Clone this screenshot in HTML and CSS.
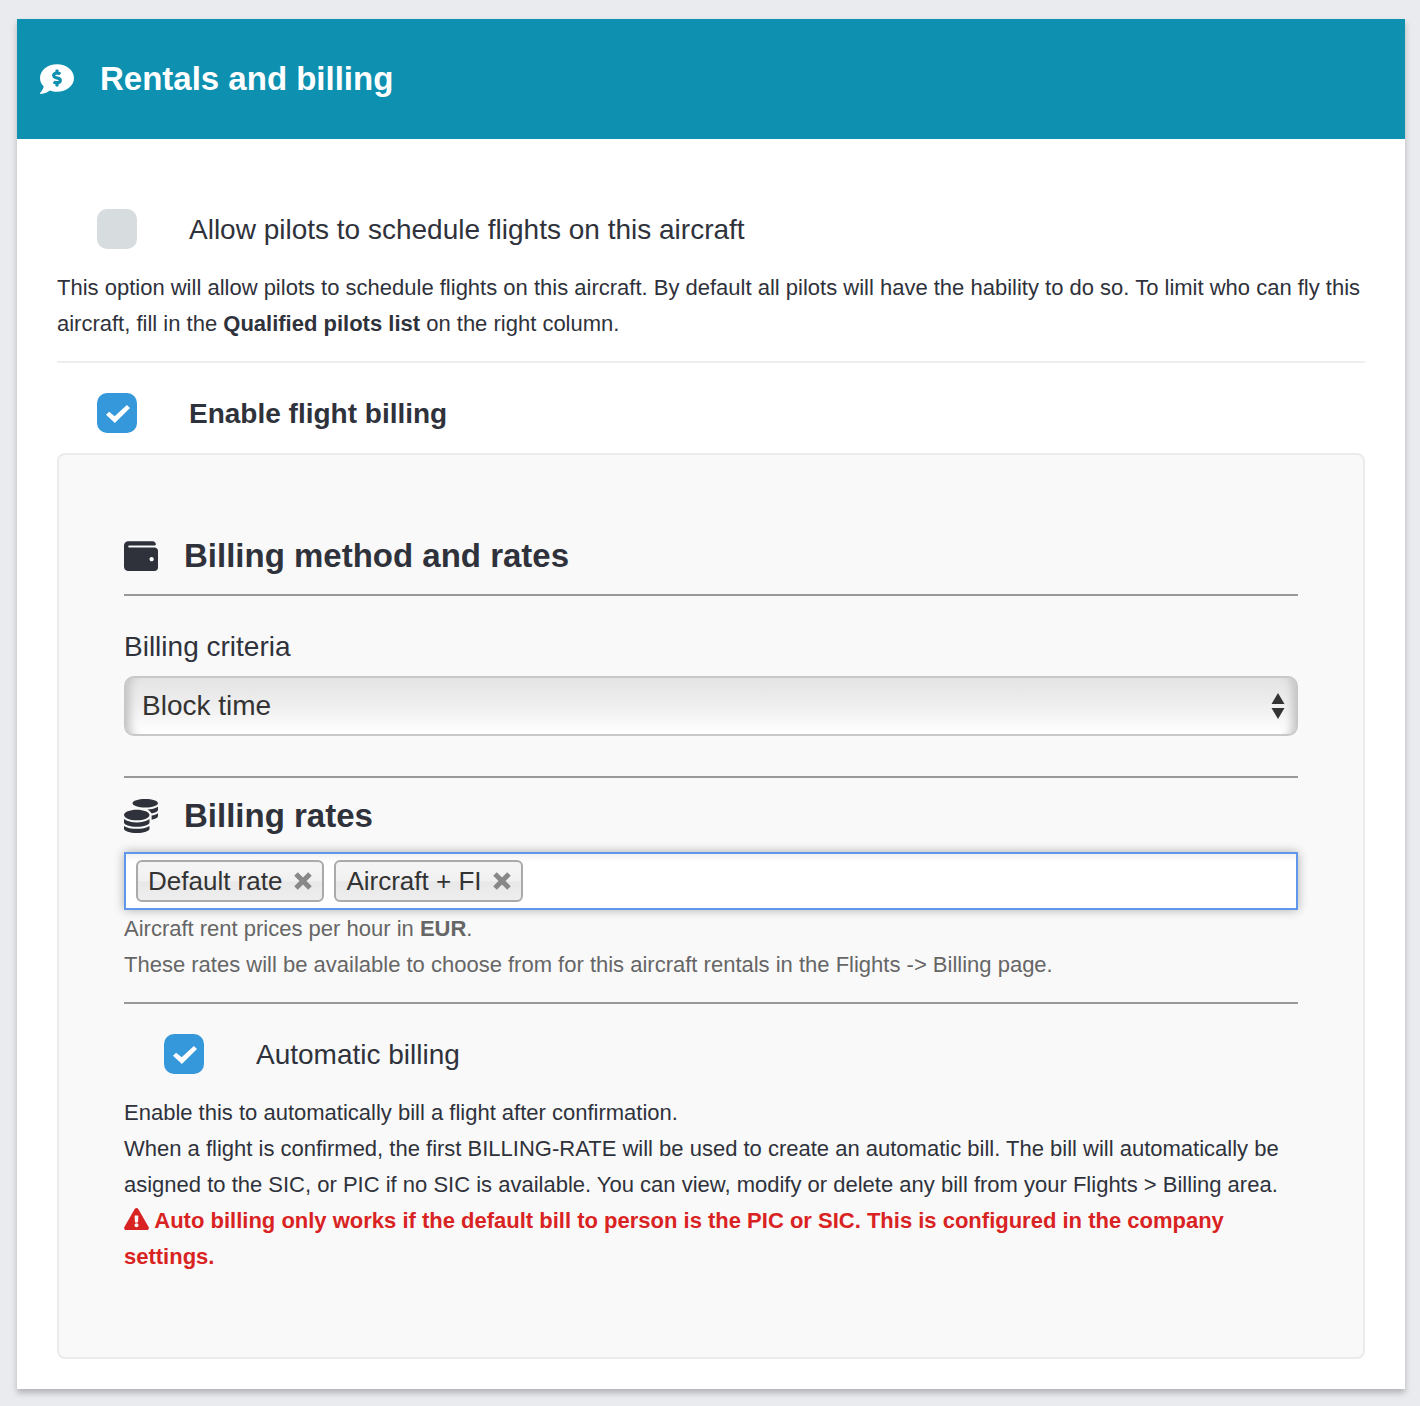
FILE: index.html
```html
<!DOCTYPE html>
<html lang="en">
  <head>
    <meta charset="UTF-8" />
    <meta name="viewport" content="width=device-width, initial-scale=1.0" />
    <title>Rentals and billing</title>
    <link rel="stylesheet" href="styles.css">
  </head>
  <body>
    <form class="card">
      <header class="card-header">
        <svg class="icon" viewBox="0 0 512 512" aria-hidden="true"><path d="M256 32C114.62 32 0 125.12 0 240c0 49.56 21.41 95.01 57.02 130.74C44.46 421.05 2.7 465.97 2.2 466.5A7.995 7.995 0 0 0 8 480c66.26 0 115.99-31.75 140.6-51.38C181.29 440.93 217.59 448 256 448c141.38 0 256-93.12 256-208S397.38 32 256 32zm24 302.44V352c0 8.84-7.16 16-16 16h-16c-8.84 0-16-7.16-16-16v-17.73c-11.42-1.35-22.28-5.19-31.78-11.46-6.22-4.11-6.82-13.11-1.55-18.38l17.52-17.52c3.74-3.74 9.31-4.24 14.11-2.03 3.18 1.46 6.66 2.22 10.26 2.22h32.78c4.66 0 8.44-3.78 8.44-8.42 0-3.75-2.52-7.08-6.12-8.11l-50.07-14.3c-22.25-6.35-40.01-24.71-42.91-47.67-4.05-32.07 19.03-59.43 49.32-63.05V128c0-8.84 7.16-16 16-16h16c8.84 0 16 7.16 16 16v17.73c11.42 1.35 22.28 5.19 31.78 11.46 6.22 4.11 6.82 13.11 1.55 18.38l-17.52 17.52c-3.74 3.74-9.31 4.24-14.11 2.03a24.516 24.516 0 0 0-10.26-2.22h-32.78c-4.66 0-8.44 3.78-8.44 8.42 0 3.75 2.52 7.08 6.12 8.11l50.07 14.3c22.25 6.36 40.01 24.71 42.91 47.67 4.05 32.06-19.03 59.42-49.32 63.04z"/></svg>
        <h2>Rentals and billing</h2>
      </header>

      <div class="card-body">
        <div class="check-row">
          <input type="checkbox" id="allowPilots" />
          <label for="allowPilots">Allow pilots to schedule flights on this aircraft</label>
        </div>
        <p class="text">This option will allow pilots to schedule flights on this aircraft. By default all pilots will have the hability to do so. To limit who can fly this aircraft, fill in the <strong>Qualified pilots list</strong> on the right column.</p>
        <hr class="light" />

        <div class="check-row">
          <input type="checkbox" id="enableBilling" checked />
          <label for="enableBilling"><strong>Enable flight billing</strong></label>
        </div>

        <section class="panel">
          <div class="section-title">
            <svg class="icon" viewBox="0 0 512 512" aria-hidden="true"><path d="M461.2 128H80c-8.84 0-16-7.16-16-16s7.16-16 16-16h384c8.84 0 16-7.16 16-16 0-26.51-21.49-48-48-48H64C28.65 32 0 60.65 0 96v320c0 35.35 28.65 64 64 64h397.2c28.02 0 50.8-21.53 50.8-48V176c0-26.47-22.78-48-50.8-48zM416 336c-17.67 0-32-14.33-32-32s14.33-32 32-32 32 14.33 32 32-14.33 32-32 32z"/></svg>
            <h3>Billing method and rates</h3>
          </div>
          <hr />

          <label class="field-label" for="criteria">Billing criteria</label>
          <div class="select-wrap">
            <select id="criteria">
              <option>Block time</option>
            </select>
            <svg class="arrows" viewBox="0 0 14 26" aria-hidden="true"><path d="M7 0l6.5 11H.5zM7 26l6.5-11H.5z"/></svg>
          </div>
          <hr />

          <div class="section-title">
            <svg class="icon" viewBox="0 0 512 512" aria-hidden="true"><path d="M0 405.3V448c0 35.3 86 64 192 64s192-28.7 192-64v-42.7C342.7 434.4 267.2 448 192 448S41.3 434.4 0 405.3zM320 128c106 0 192-28.7 192-64S426 0 320 0 128 28.7 128 64s86 64 192 64zM0 300.4V352c0 35.3 86 64 192 64s192-28.7 192-64v-51.6c-41.3 34-116.9 51.6-192 51.6S41.3 334.4 0 300.4zm416 11c57.3-11.1 96-31.7 96-55.4v-42.7c-23.2 16.4-57.3 27.6-96 34.5v63.6zM192 160C86 160 0 195.8 0 240s86 80 192 80 192-35.8 192-80-86-80-192-80zm219.3 56.3c60-10.8 100.7-32 100.7-56.3v-42.7c-35.5 25.1-96.5 38.6-160.7 41.8 29.5 14.3 51.2 33.5 60 57.2z"/></svg>
            <h3><label for="rates">Billing rates</label></h3>
          </div>
          <div class="tags">
            <span class="tag">Default rate
              <button type="button" aria-label="Remove Default rate"><svg viewBox="0 0 18 18"><path d="M2 2l14 14M16 2L2 16"/></svg></button>
            </span>
            <span class="tag">Aircraft + FI
              <button type="button" aria-label="Remove Aircraft + FI"><svg viewBox="0 0 18 18"><path d="M2 2l14 14M16 2L2 16"/></svg></button>
            </span>
            <input type="text" id="rates" autocomplete="off" />
          </div>
          <p class="text help">Aircraft rent prices per hour in <strong>EUR</strong>.<br />These rates will be available to choose from for this aircraft rentals in the Flights -&gt; Billing page.</p>
          <hr />

          <div class="check-row">
            <input type="checkbox" id="autoBilling" checked />
            <label for="autoBilling">Automatic billing</label>
          </div>
          <p class="text">Enable this to automatically bill a flight after confirmation.<br />When a flight is confirmed, the first BILLING-RATE will be used to create an automatic bill. The bill will automatically be asigned to the SIC, or PIC if no SIC is available. You can view, modify or delete any bill from your Flights &gt; Billing area.</p>
          <p class="text warning"><svg viewBox="0 0 576 512" aria-hidden="true"><path d="M569.517 440.013C587.975 472.007 564.806 512 527.94 512H48.054c-36.937 0-59.999-40.055-41.577-71.987L246.423 23.985c18.467-32.009 64.72-31.951 83.154 0l239.94 416.028zM288 354c-25.405 0-46 20.595-46 46s20.595 46 46 46 46-20.595 46-46-20.595-46-46-46zm-43.673-165.346l7.418 136c.347 6.364 5.609 11.346 11.982 11.346h48.546c6.373 0 11.635-4.982 11.982-11.346l7.418-136c.375-6.874-5.098-12.654-11.982-12.654h-63.383c-6.884 0-12.356 5.78-11.981 12.654z"/></svg> Auto billing only works if the default bill to person is the PIC or SIC. This is configured in the company settings.</p>
        </section>
      </div>
    </form>
  </body>
</html>
```
FILE: styles.css
```css
* {
  margin: 0;
  padding: 0;
  box-sizing: border-box;
}

body {
  padding: 19px 15px 17px 17px;
  background-color: #e9ebee;
  color: #2f323b;
  font-family: "Helvetica Neue", Helvetica, "Liberation Sans", Arial, sans-serif;
  font-size: 28px;
}

/* Card */
.card {
  background-color: #fff;
  box-shadow: 0 4px 6px rgba(0, 0, 0, 0.24);
}

.card-header {
  display: flex;
  align-items: center;
  gap: 26px;
  height: 120px;
  padding: 0 23px;
  background-color: #0e90b1;
  color: #fff;
}

.card-body {
  padding: 70px 40px 30px;
}

h2,
h3 {
  font-size: 33px;
  font-weight: bold;
  line-height: 40px;
}

.icon {
  width: 34px;
  height: 34px;
  flex: none;
  fill: currentColor;
}

hr {
  border: none;
  border-top: 2px solid #999;
}

hr.light {
  margin: 19px 0 30px;
  border-color: #eee;
}

/* Checkboxes */
.check-row {
  display: flex;
  align-items: center;
  gap: 52px;
  padding-left: 40px;
}

.check-row label {
  padding-top: 2px;
  line-height: 38px;
}

.check-row input {
  appearance: none;
  display: grid;
  place-items: center;
  width: 40px;
  height: 40px;
  flex: none;
  border-radius: 10px;
  background-color: #d7dcde;
}

.check-row input:checked {
  background-color: #3498db;
}

.check-row input:checked::after {
  content: "";
  width: 24px;
  height: 18px;
  margin-top: 2px;
  margin-left: 2px;
  background-color: #fff;
  clip-path: polygon(0 54%, 13% 37%, 36% 62%, 87% 0, 100% 17%, 37% 100%);
}

/* Text */
.text {
  font-size: 22px;
  line-height: 36px;
}

.check-row + .text {
  margin-top: 21px;
}

.help {
  margin-top: 1px;
  margin-bottom: 19px;
  color: #666;
}

.warning {
  color: #d92323;
  font-weight: bold;
}

.warning svg {
  width: 25px;
  height: 22px;
  vertical-align: -2px;
  fill: currentColor;
}

/* Billing panel */
.panel {
  margin-top: 20px;
  padding: 81px 65px 82px;
  border: 2px solid #ebebeb;
  border-radius: 8px;
  background-color: #f9f9f9;
}

.section-title {
  display: flex;
  align-items: center;
  gap: 26px;
  margin-bottom: 18px;
}

.panel > hr + .check-row {
  margin-top: 30px;
}

.field-label {
  display: block;
  margin-top: 31px;
  margin-bottom: 9px;
  line-height: 40px;
}

.select-wrap {
  position: relative;
  margin-bottom: 40px;
}

.select-wrap select {
  appearance: none;
  display: block;
  width: 100%;
  height: 60px;
  padding: 0 40px 2px 16px;
  border: 2px solid #c8c8c8;
  border-radius: 10px;
  background: linear-gradient(#e4e4e4, #efefef 50%, #fff);
  box-shadow: inset 12px 0 8px -8px #c4c4c4, inset -12px 0 8px -8px #c4c4c4;
  color: #333;
  font: inherit;
}

.arrows {
  position: absolute;
  top: 17px;
  right: 13px;
  width: 14px;
  height: 26px;
  fill: #333;
}

hr + .section-title {
  margin-top: 18px;
  margin-bottom: 16px;
}

/* Rate tags */
.tags {
  display: flex;
  gap: 10px;
  padding: 6px 10px;
  border: 2px solid #5f97eb;
  background: linear-gradient(#f2f2f2, #fff 15%);
  box-shadow: 0 0 10px rgba(0, 0, 0, 0.3);
}

.tag {
  display: flex;
  align-items: center;
  gap: 12px;
  height: 42px;
  padding: 0 10px;
  border: 2px solid #aaa;
  border-radius: 6px;
  background: linear-gradient(#f4f4f4 20%, #f0f0f0 50%, #e8e8e8 52%, #eee);
  color: #333;
  font-size: 26px;
}

.tag button {
  display: block;
  width: 18px;
  height: 18px;
  border: none;
  background: none;
  cursor: pointer;
}

.tag svg {
  display: block;
  stroke: #888;
  stroke-width: 5;
}

.tags input {
  flex: 1;
  min-width: 0;
  border: none;
  outline: none;
  background: none;
  font: inherit;
}
```
